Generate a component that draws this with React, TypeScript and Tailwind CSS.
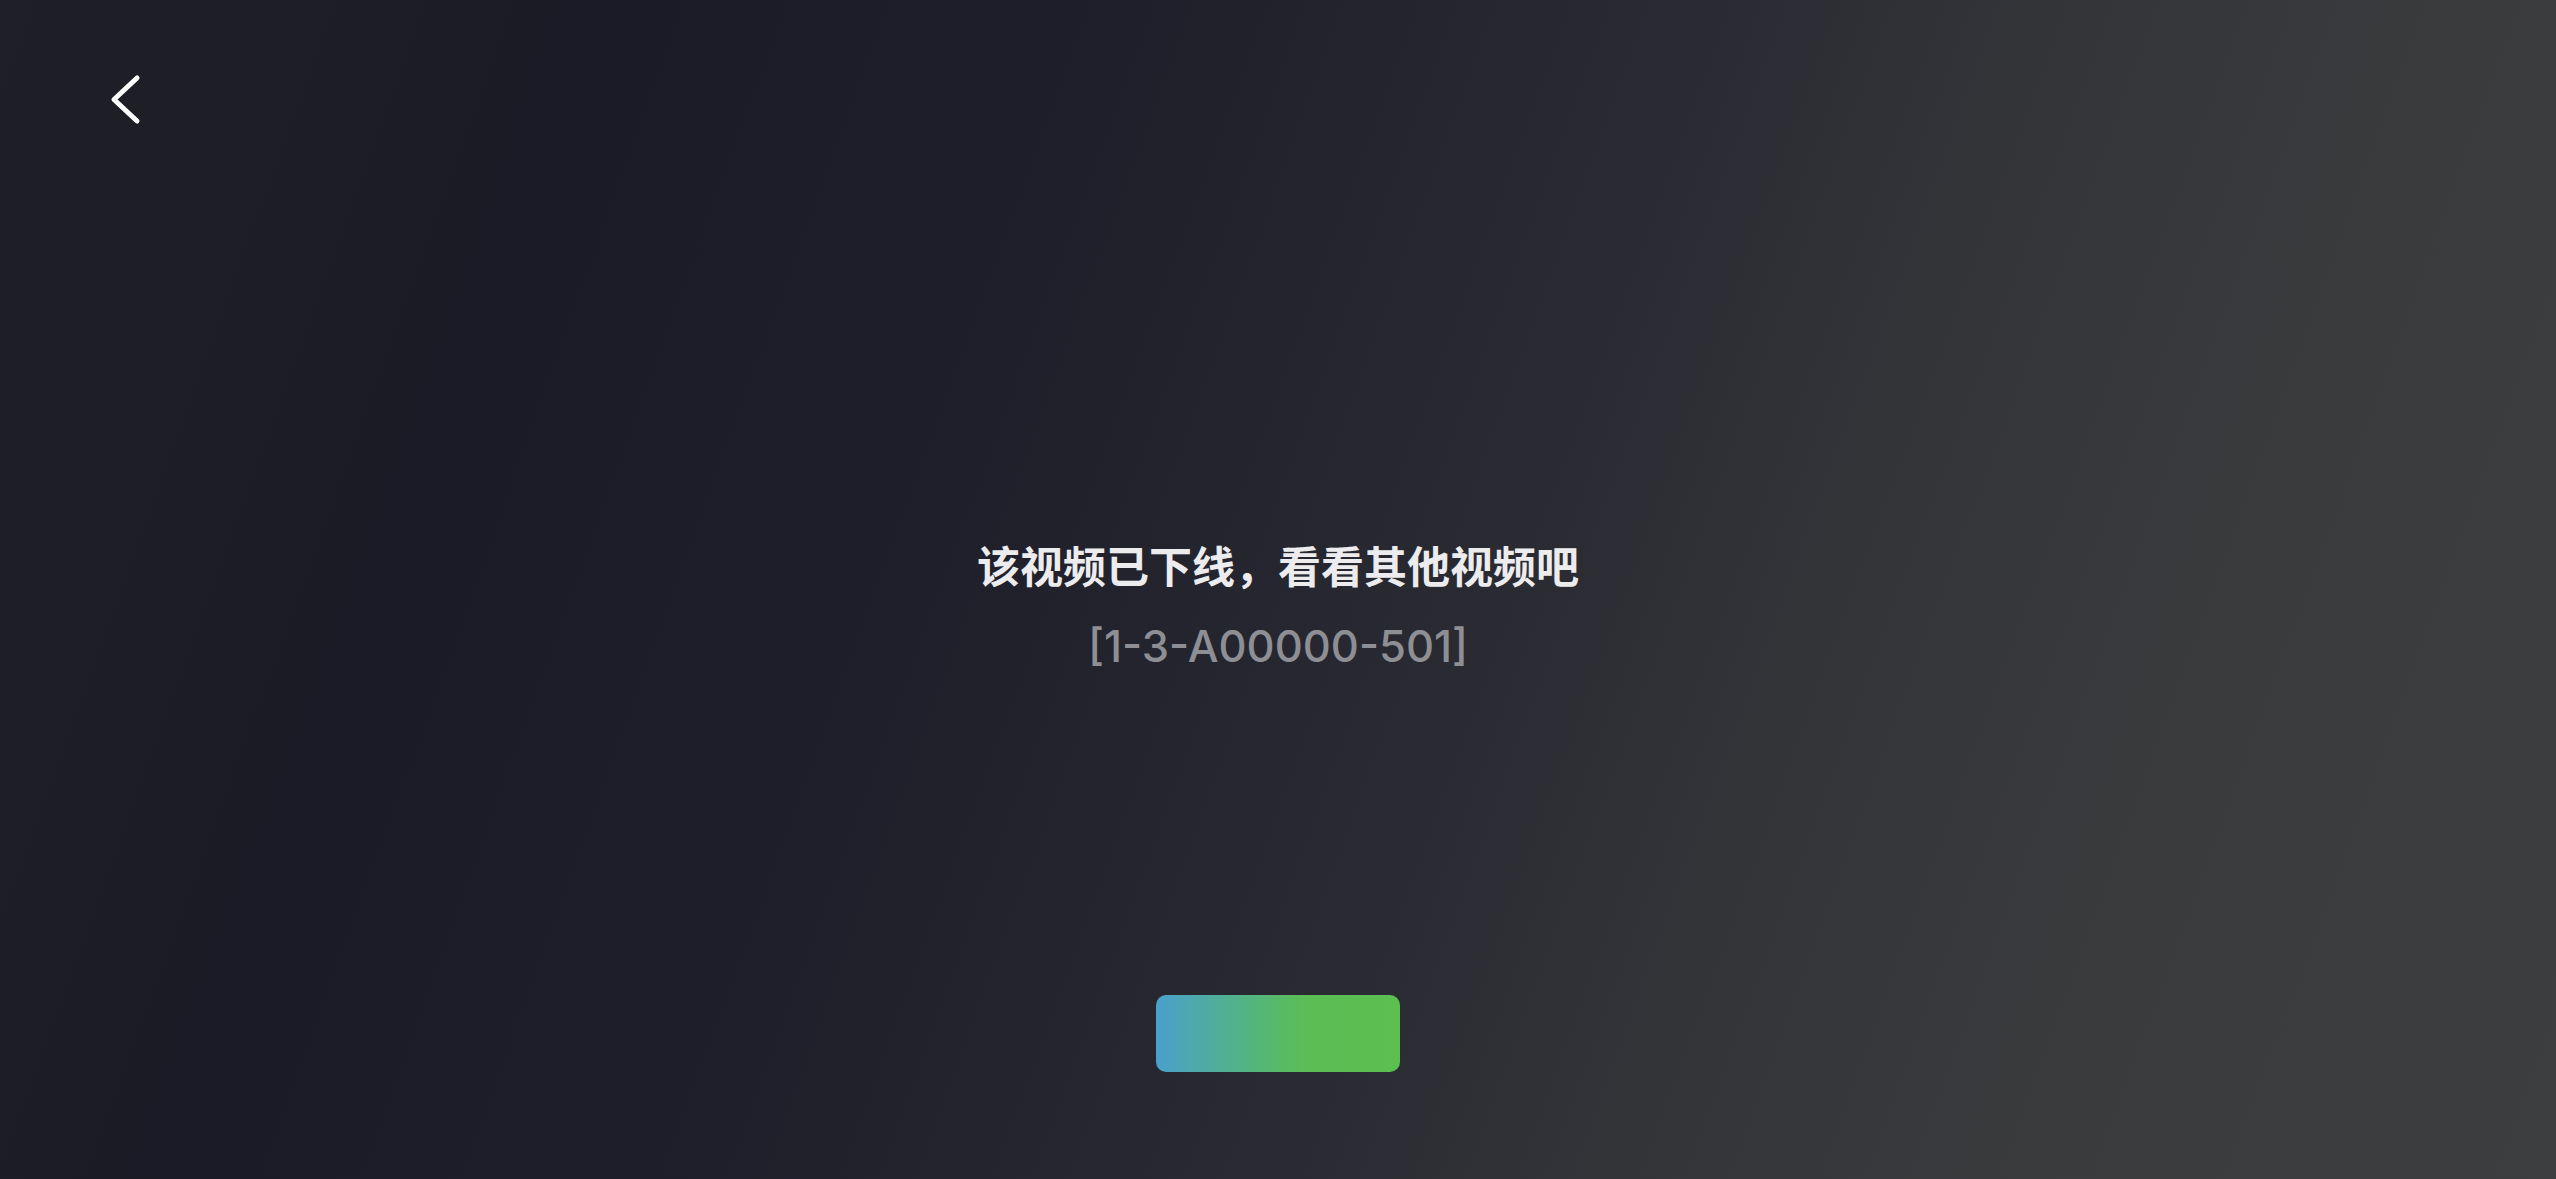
export default function App() {
  return (
    <div className="w-full h-[1179px] overflow-hidden flex flex-col bg-[linear-gradient(110deg,#1f2026_0%,#1a1b26_20%,#1e1f2a_38%,#282931_55%,#333438_68%,#393b3d_82%,#3c3e40_100%)] font-['Inter','Noto_Sans_CJK_SC',sans-serif]">
      {/* Header with back chevron */}
      <div className="pl-[110px] pt-[73px] h-[124px] shrink-0">
        <button className="block w-[32px] h-[52px]" aria-label="返回">
          <svg width="32" height="52" viewBox="0 0 32 52" fill="none">
            <polyline
              points="27,5 4,26.5 27,48"
              stroke="#ffffff"
              strokeWidth="5"
              strokeLinecap="round"
              strokeLinejoin="round"
            />
          </svg>
        </button>
      </div>

      {/* Message */}
      <div className="flex flex-col items-center mt-[411px]">
        <h1 className="text-[43px] leading-[58px] font-semibold text-[#ececee] font-['Noto_Sans_CJK_SC',sans-serif]">
          该视频已下线，看看其他视频吧
        </h1>
        <p className="mt-[23px] text-[43.5px] leading-[60px] font-medium text-[#8e8e95]">[1-3-A00000-501]</p>
        <button className="mt-[319px] w-[244px] h-[77px] rounded-[10px] bg-[linear-gradient(90deg,#49a0cc_0%,#52b386_35%,#5abd56_60%,#5cbf50_100%)]" />
      </div>
    </div>
  )
}
